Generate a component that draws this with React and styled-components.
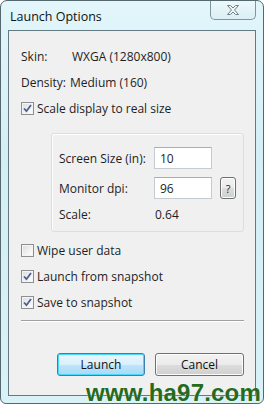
import React from 'react';
import styled, { createGlobalStyle } from 'styled-components';

const Global = createGlobalStyle`
  html, body { margin: 0; padding: 0; background: #fff; }
  body { font-family: "Open Sans", "Noto Sans", sans-serif; font-size: 12px; color: #1e1e1e; }
`;

const Window = styled.div`
  position: relative;
  width: 264px;
  height: 404px;
  box-sizing: border-box;
  border: 1px solid #55686e;
  border-radius: 7px 7px 6px 6px;
  background: linear-gradient(180deg, #e2f6fb 0%, #d4eef5 40%, #d9f2f8 100%);
  display: flex;
  flex-direction: column;
  padding: 0 7px 7px 7px;
  overflow: hidden;
`;

const TitleBar = styled.div`
  height: 29px;
  display: flex;
  align-items: flex-start;
  justify-content: space-between;
`;

const Title = styled.div`
  padding: 7px 0 0 2px;
  font-size: 12.5px;
  color: #111;
`;

const CloseBtn = styled.div`
  width: 46px;
  height: 20px;
  margin-top: -1px;
  box-sizing: border-box;
  border: 1px solid #7e959c;
  border-top: none;
  border-radius: 0 0 5px 5px;
  background: linear-gradient(180deg, #eef9fc 0%, #dbeff5 100%);
  display: flex;
  align-items: center;
  justify-content: center;
`;

const Client = styled.div`
  flex: 1;
  border: 1px solid #627a80;
  background: #f0f0f0;
  padding: 15px 11px 0 12px;
  display: flex;
  flex-direction: column;
`;

const Row = styled.div`
  height: 20px;
  display: flex;
  align-items: center;
  margin-top: ${(p) => p.$mt || 0}px;
`;

const Label = styled.span`
  width: ${(p) => p.$w}px;
  flex: none;
`;

const Box = styled.span`
  width: 13px;
  height: 13px;
  box-sizing: border-box;
  border: 1px solid #8e8f8f;
  background: linear-gradient(135deg, #dcdcdc 0%, #f6f6f6 70%, #fff 100%);
  box-shadow: inset 0 0 0 1px #f4f4f4;
  margin-right: 3px;
  display: flex;
  align-items: center;
  justify-content: center;
`;

const Group = styled.div`
  margin: 15px 0 0 30px;
  border: 1px solid #d5dfe5;
  border-radius: 3px;
  box-shadow: inset 1px 1px 0 #fff;
  padding: 13px 7px 7px 7px;
  display: flex;
  flex-direction: column;
`;

const FieldRow = styled.div`
  height: 22px;
  display: flex;
  align-items: center;
  margin-top: ${(p) => p.$mt || 0}px;
`;

const Input = styled.div`
  width: 58px;
  height: 22px;
  box-sizing: border-box;
  border: 1px solid #c5cbd2;
  border-top-color: #abadb3;
  background: #fff;
  padding-left: 5px;
  display: flex;
  align-items: center;
`;

const HelpBtn = styled.div`
  width: 16px;
  height: 22px;
  margin-left: 8px;
  box-sizing: border-box;
  border: 1px solid #707070;
  border-radius: 3px;
  background: linear-gradient(180deg, #f2f2f2 0%, #ebebeb 50%, #dddddd 51%, #cfcfcf 100%);
  box-shadow: inset 0 0 0 1px #fcfcfc;
  display: flex;
  align-items: center;
  justify-content: center;
  font-size: 11px;
`;

const Separator = styled.div`
  margin-top: 8px;
  height: 1px;
  background: #a0a0a0;
  border-bottom: 1px solid #fff;
`;

const Buttons = styled.div`
  margin-top: 31px;
  display: flex;
  justify-content: flex-end;
  gap: 10px;
`;

const Button = styled.div`
  width: ${(p) => p.$w}px;
  height: 23px;
  box-sizing: border-box;
  border: 1px solid ${(p) => (p.$def ? '#3c7fb1' : '#707070')};
  border-radius: 3px;
  background: ${(p) =>
    p.$def
      ? 'linear-gradient(180deg, #eaf6fd 0%, #d9f0fc 50%, #bee6fd 51%, #a7d9f5 100%)'
      : 'linear-gradient(180deg, #f2f2f2 0%, #ebebeb 50%, #dddddd 51%, #cfcfcf 100%)'};
  box-shadow: inset 0 0 0 1px ${(p) => (p.$def ? '#48d8fb' : '#fcfcfc')};
  display: flex;
  align-items: center;
  justify-content: center;
  color: #111;
`;

const Watermark = styled.div`
  position: absolute;
  right: 2px;
  bottom: 0;
  font-family: "Liberation Sans", Arial, sans-serif;
  font-weight: bold;
  font-size: 24px;
  line-height: 20px;
  letter-spacing: 0.2px;
  color: #256a20;
  text-shadow: 0 0 1px #fff;
`;

function Check({ checked }) {
  return (
    <Box>
      {checked && (
        <svg width="9" height="9" viewBox="0 0 9 9">
          <path d="M1 4.5 L3.5 7.2 L8 1" fill="none" stroke="#4a5f97" strokeWidth="1.8" />
        </svg>
      )}
    </Box>
  );
}

export default function App() {
  return (
    <>
      <Global />
      <Window>
        <TitleBar>
          <Title>Launch Options</Title>
          <CloseBtn>
            <svg width="14" height="12" viewBox="0 0 14 12">
              <path
                d="M1.5 1.5 H4.5 L7 4 L9.5 1.5 H12.5 L8.5 6 L12.5 10.5 H9.5 L7 8 L4.5 10.5 H1.5 L5.5 6 Z"
                fill="#eef6f8"
                stroke="#6f8088"
                strokeWidth="1"
              />
            </svg>
          </CloseBtn>
        </TitleBar>
        <Client>
          <Row>
            <Label $w={51}>Skin:</Label>
            <span>WXGA (1280x800)</span>
          </Row>
          <Row $mt={6}>
            <Label $w={49}>Density:</Label>
            <span>Medium (160)</span>
          </Row>
          <Row $mt={6}>
            <Check checked />
            <span>Scale display to real size</span>
          </Row>
          <Group>
            <FieldRow>
              <Label $w={95}>Screen Size (in):</Label>
              <Input>10</Input>
            </FieldRow>
            <FieldRow $mt={8}>
              <Label $w={95}>Monitor dpi:</Label>
              <Input>96</Input>
              <HelpBtn>?</HelpBtn>
            </FieldRow>
            <Row $mt={5}>
              <Label $w={96}>Scale:</Label>
              <span>0.64</span>
            </Row>
          </Group>
          <Row $mt={8}>
            <Check />
            <span>Wipe user data</span>
          </Row>
          <Row $mt={6}>
            <Check checked />
            <span>Launch from snapshot</span>
          </Row>
          <Row $mt={6}>
            <Check checked />
            <span>Save to snapshot</span>
          </Row>
          <Separator />
          <Buttons>
            <Button $w={88} $def>Launch</Button>
            <Button $w={89}>Cancel</Button>
          </Buttons>
        </Client>
        <Watermark>www.ha97.com</Watermark>
      </Window>
    </>
  );
}
